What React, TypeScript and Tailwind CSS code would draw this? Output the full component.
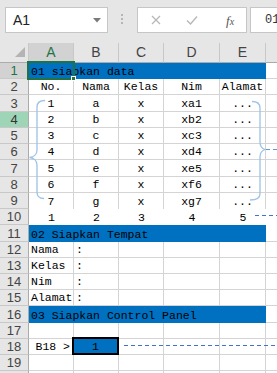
import React from 'react';

type Align = 'l' | 'c' | 'r';
type CellDef = [string, Align];

interface RowDef {
  n: number;
  blue?: string;
  cells?: CellDef[];
  noBottom?: boolean;
  noGrid?: boolean;
  control?: boolean;
}

const TALL = [3, 7, 11, 16];

const c = (t: string): CellDef => [t, 'c'];
const l = (t: string): CellDef => [t, 'l'];

const rows: RowDef[] = [
  { n: 1, blue: '01 siapkan data' },
  { n: 2, cells: [c('No.'), c('Nama'), c('Kelas'), c('Nim'), c('Alamat')] },
  { n: 3, cells: [c('1'), c('a'), c('x'), c('xa1'), c('...')] },
  { n: 4, cells: [c('2'), c('b'), c('x'), c('xb2'), c('...')] },
  { n: 5, cells: [c('3'), c('c'), c('x'), c('xc3'), c('...')] },
  { n: 6, cells: [c('4'), c('d'), c('x'), c('xd4'), c('...')] },
  { n: 7, cells: [c('5'), c('e'), c('x'), c('xe5'), c('...')] },
  { n: 8, cells: [c('6'), c('f'), c('x'), c('xf6'), c('...')] },
  { n: 9, cells: [c('7'), c('g'), c('x'), c('xg7'), c('...')], noBottom: true },
  { n: 10, cells: [c('1'), c('2'), c('3'), c('4'), c('5')], noGrid: true },
  { n: 11, blue: '02 Siapkan Tempat' },
  { n: 12, cells: [l('Nama'), l(':')] },
  { n: 13, cells: [l('Kelas'), l(':')] },
  { n: 14, cells: [l('Nim'), l(':')] },
  { n: 15, cells: [l('Alamat'), l(':')] },
  { n: 16, blue: '03 Siapkan Control Panel' },
  { n: 17 },
  { n: 18, control: true },
  { n: 19 },
  { n: 20 },
];

const widths = ['w-[45px]', 'w-[45px]', 'w-[45px]', 'w-[56px]', 'w-[46px]'];
const letters = ['A', 'B', 'C', 'D', 'E'];

function RowHeader({ n }: { n: number }) {
  let tone = 'bg-[#e6e6e6] text-[#444]';
  if (n === 1) tone = 'bg-[#d2d2d2] text-[#217346]';
  if (n === 4) tone = 'bg-[#9fd5b7] text-[#333]';
  return (
    <div
      className={`${tone} w-[29px] shrink-0 h-full border-r border-b border-r-[#ababab] border-b-[#c8c8c8] flex items-center justify-center text-[13px] leading-none font-['Liberation_Sans',Arial,sans-serif]`}
    >
      {n}
    </div>
  );
}

function GridCell({ w, def, noBottom, noGrid }: { w: string; def?: CellDef; noBottom?: boolean; noGrid?: boolean }) {
  const border = noGrid ? '' : noBottom ? 'border-r border-[#d4d4d4]' : 'border-r border-b border-[#d4d4d4]';
  const align = def?.[1] === 'l' ? 'justify-start pl-[2px]' : def?.[1] === 'r' ? 'justify-end pr-[3px]' : 'justify-center';
  return (
    <div className={`${w} shrink-0 h-full bg-white ${border} flex items-end ${align} pb-[1px] whitespace-nowrap`}>
      {def?.[0]}
    </div>
  );
}

function SheetRow({ row }: { row: RowDef }) {
  const h = TALL.includes(row.n) ? 'h-[17px]' : 'h-[16px]';
  const fBorder = row.noGrid ? '' : row.noBottom ? 'border-[#d4d4d4]' : 'border-b border-[#d4d4d4]';
  return (
    <div className={`flex ${h} text-[11.5px] leading-[13px] text-black font-['Liberation_Mono','DejaVu_Sans_Mono',monospace]`}>
      <RowHeader n={row.n} />
      {row.blue ? (
        <div className="w-[237px] shrink-0 h-full bg-[#0070c0] flex items-end pl-[2px] pb-[1px] whitespace-nowrap">
          {row.blue}
        </div>
      ) : row.control ? (
        <>
          <GridCell w="w-[45px]" def={['B18 >', 'r']} />
          <div className="w-[45px] shrink-0 h-full bg-white border-r border-b border-[#d4d4d4] relative">
            <div className="absolute -left-[2px] -top-[2px] -right-[1px] -bottom-[1px] border-2 border-black bg-[#0070c0] flex items-center justify-center">
              1
            </div>
          </div>
          {widths.slice(2).map((w, i) => (
            <GridCell key={i} w={w} />
          ))}
        </>
      ) : (
        widths.map((w, i) => (
          <GridCell key={i} w={w} def={row.cells?.[i]} noBottom={row.noBottom} noGrid={row.noGrid} />
        ))
      )}
      <div className={`flex-1 h-full bg-white ${fBorder}`} />
    </div>
  );
}

export default function App() {
  return (
    <div className="w-[277px] h-[373px] overflow-hidden bg-[#e6e6e6] relative font-['Liberation_Sans',Arial,sans-serif]">
      {/* formula bar */}
      <div className="h-[43px] flex items-start pt-[7px] pl-[5px]">
        <div className="w-[103px] h-[26px] bg-white border border-[#c6c6c6] flex items-center pl-[7px] pr-[6px] text-[14px] text-[#222]">
          <span className="flex-1">A1</span>
          <svg width="8" height="5" viewBox="0 0 8 5">
            <path d="M0 0h8L4 4.5z" fill="#7a7a7a" />
          </svg>
        </div>
        <div className="ml-[13px] mt-[7px] w-[2px] flex flex-col gap-[2px]">
          <div className="w-[2px] h-[2px] bg-[#b5b5b5]" />
          <div className="w-[2px] h-[2px] bg-[#b5b5b5]" />
          <div className="w-[2px] h-[2px] bg-[#b5b5b5]" />
        </div>
        <div className="ml-[14px] w-[110px] h-[26px] bg-white border border-[#c6c6c6] flex items-center pl-[13px]">
          <svg width="10" height="10" viewBox="0 0 10 10">
            <path d="M1 1l8 8M9 1l-8 8" stroke="#b8b8b8" strokeWidth="1.3" />
          </svg>
          <svg className="ml-[25px]" width="12" height="10" viewBox="0 0 12 10">
            <path d="M1 5.5l3.5 3.5L11 1.5" stroke="#b8b8b8" strokeWidth="1.4" fill="none" />
          </svg>
          <span className="ml-[28px] italic text-[13px] text-[#555] font-['Liberation_Serif',serif] leading-none">
            f<span className="text-[10px]">x</span>
          </span>
        </div>
        <div className="ml-[3px] flex-1 h-[26px] bg-white border border-r-0 border-[#c6c6c6] flex items-center pl-[14px] text-[12px] text-[#333] whitespace-nowrap overflow-hidden font-['Liberation_Mono',monospace]">
          01 siapkan data
        </div>
      </div>

      {/* column headers */}
      <div className="flex h-[20px] text-[14px] text-[#444]">
        <div className="w-[29px] shrink-0 border-r border-b border-r-[#c8c8c8] border-b-[#ababab] relative">
          <svg className="absolute left-0 top-0" width="28" height="19" viewBox="0 0 28 19">
            <path d="M25 4v10H15z" fill="#b4b4b4" />
          </svg>
        </div>
        {letters.map((L, i) => (
          <div
            key={L}
            className={`${widths[i]} shrink-0 border-r border-b border-r-[#c8c8c8] border-b-[#ababab] flex items-center justify-center ${L === 'A' ? 'bg-[#d2d2d2] text-[#217346]' : ''}`}
          >
            {L}
          </div>
        ))}
        <div className="flex-1 border-b border-b-[#ababab]" />
      </div>

      {/* rows */}
      {rows.map((r) => (
        <SheetRow key={r.n} row={r} />
      ))}

      {/* active cell A1 */}
      <div className="absolute left-[27px] top-[61px] w-[48px] h-[19px] border-2 border-[#217346]" />
      <div className="absolute left-[71px] top-[76px] w-[5px] h-[5px] bg-[#217346] border border-white" />

      {/* braces and connectors */}
      <svg className="absolute left-0 top-0 pointer-events-none" width="277" height="373" viewBox="0 0 277 373">
        <path
          d="M45 100.5C40 100.5 37 102.5 37 107V150C37 154 34 157 29.5 157.5C34 158 37 161 37 165V192C37 196.5 40 198.5 44 198.5"
          fill="none"
          stroke="#9dc3e6"
          strokeWidth="1.3"
        />
        <path
          d="M252 101.5C257 101.5 260 103.5 260 108V142C260 146 262 148.5 265 149.5C262 150.5 260 153 260 157V194C260 198 257 200 250 200"
          fill="none"
          stroke="#9dc3e6"
          strokeWidth="1.3"
        />
        <path d="M266 149.5H277" stroke="#5b9bd5" strokeWidth="1" strokeDasharray="4 3" />
        <path d="M255 215.5H277" stroke="#4472c4" strokeWidth="1" strokeDasharray="4 3" />
        <path d="M124 345.5H277" stroke="#4472c4" strokeWidth="1" strokeDasharray="4 3" />
      </svg>
    </div>
  );
}
